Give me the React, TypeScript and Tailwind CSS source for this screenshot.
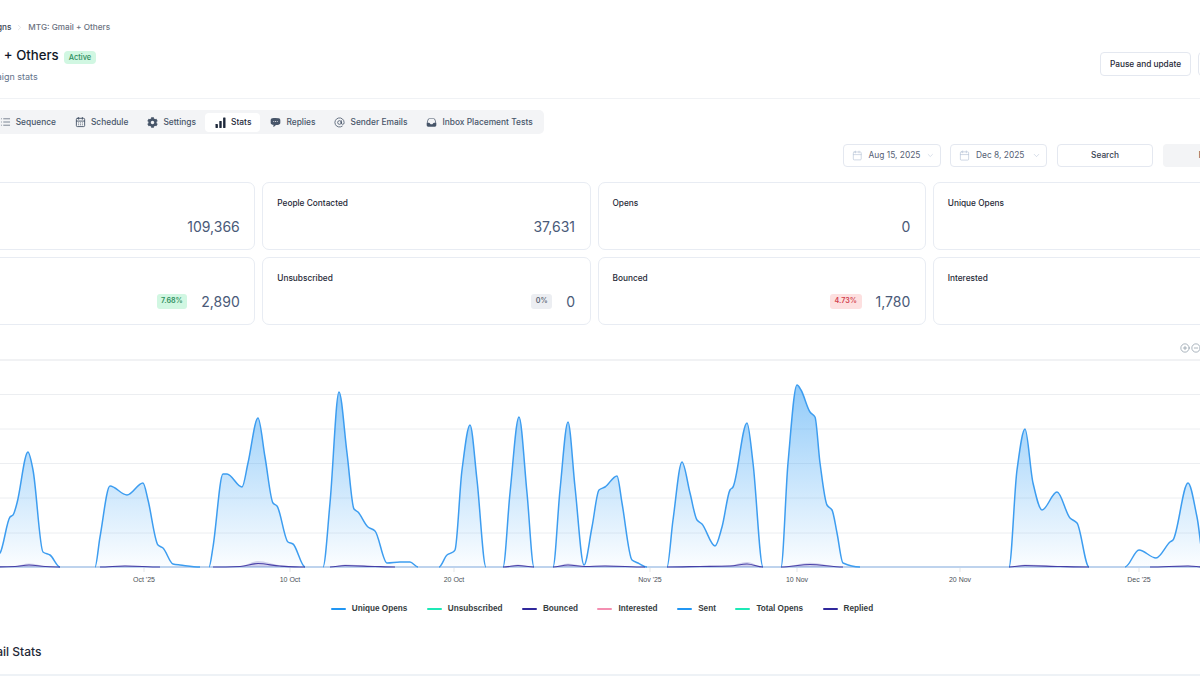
import { AtSign, Calendar, ChevronDown, ChevronRight, CircleMinus, CirclePlus, List, Users } from 'lucide-react';
import { FaCog } from 'react-icons/fa';
import { HiChatBubbleLeftEllipsis, HiInbox } from 'react-icons/hi2';
import { LuCalendarDays } from 'react-icons/lu';
import type { ReactNode } from 'react';

type Pt = [number, number];

const BASE = 567;

// main curve, one list per hump, in screen coordinates
const humps: Pt[][] = [
  [[-20, 567], [0, 553], [10, 517], [13, 515], [17, 503], [28, 452], [33, 470], [43, 552], [50, 555], [60, 567]],
  [[95, 567], [100, 537], [110, 486], [127, 495], [143, 483], [148, 500], [158, 545], [163, 548], [173, 564], [180, 565], [200, 567]],
  [[209, 567], [213, 547], [223, 474], [227, 474], [242, 487], [248, 463], [258, 418], [265, 457], [273, 503], [277, 506], [288, 542], [293, 544], [305, 567]],
  [[323, 567], [330, 503], [339, 392], [347, 453], [354, 509], [358, 512], [368, 527], [375, 531], [387, 563], [400, 562], [410, 562], [418, 567]],
  [[439, 567], [447, 555], [453, 552], [455, 550], [462, 470], [470, 425], [477, 480], [486, 567]],
  [[503, 567], [510, 493], [519, 417], [527, 493], [534, 567]],
  [[553, 567], [560, 490], [568, 422], [575, 487], [584, 565], [592, 527], [599, 490], [605, 487], [617, 476], [622, 503], [632, 560], [638, 563], [647, 567]],
  [[667, 567], [673, 520], [682, 462], [690, 493], [697, 520], [702, 524], [715, 546], [722, 527], [730, 490], [733, 487], [747, 423], [753, 463], [763, 567]],
  [[781, 567], [788, 463], [797, 385], [801, 390], [810, 412], [815, 417], [820, 463], [827, 505], [832, 510], [837, 533], [843, 563], [860, 567]],
  [[1009, 567], [1017, 470], [1025, 429], [1033, 483], [1042, 510], [1057, 492], [1070, 518], [1077, 523], [1089, 567]],
  [[1125, 567], [1139, 550], [1156, 558], [1170, 542], [1173, 540], [1188, 483], [1197, 517], [1205, 567]],
];

const bumps: Pt[][] = [
  [[-10, 567], [15, 566.5], [29, 565], [45, 566.5], [60, 567]],
  [[100, 567], [125, 566], [160, 567]],
  [[213, 567], [240, 566.5], [258, 563.5], [280, 566], [305, 567]],
  [[330, 567], [345, 565.5], [375, 566.5], [395, 567]],
  [[503, 567], [518, 565.5], [534, 567]],
  [[553, 567], [568, 565], [585, 566.5], [605, 566], [645, 567]],
  [[667, 567], [700, 566.5], [730, 566], [747, 564], [763, 567]],
  [[781, 567], [810, 564.5], [843, 567]],
  [[1009, 567], [1025, 565.5], [1060, 566.5], [1089, 567]],
  [[1150, 567], [1188, 566], [1205, 567]],
];

// monotone cubic, flat at peaks and at the baseline
const smooth = (pts: Pt[]) => {
  const s = pts.slice(1).map((p, i) => (p[1] - pts[i][1]) / (p[0] - pts[i][0]));
  const m = pts.map((_, i) => {
    if (i === 0 || i === pts.length - 1) return 0;
    const a = s[i - 1];
    const b = s[i];
    return a * b <= 0 ? 0 : (2 * a * b) / (a + b);
  });
  let d = `M${pts[0][0]} ${pts[0][1]}`;
  for (let i = 0; i < pts.length - 1; i++) {
    const dx = (pts[i + 1][0] - pts[i][0]) / 3;
    d += ` C${pts[i][0] + dx} ${pts[i][1] + m[i] * dx} ${pts[i + 1][0] - dx} ${pts[i + 1][1] - m[i + 1] * dx} ${pts[i + 1][0]} ${pts[i + 1][1]}`;
  }
  return d;
};

const gridLines = [360, 394.5, 429, 463.5, 498, 533];

const ticks: [number, string][] = [
  [144, "Oct '25"],
  [290, '10 Oct'],
  [454, '20 Oct'],
  [650, "Nov '25"],
  [797, '10 Nov'],
  [960, '20 Nov'],
  [1139, "Dec '25"],
];

const legend = [
  { label: 'Unique Opens', color: 'bg-[#2196f3]' },
  { label: 'Unsubscribed', color: 'bg-[#1de9b6]' },
  { label: 'Bounced', color: 'bg-[#30289c]' },
  { label: 'Interested', color: 'bg-[#f48fb1]' },
  { label: 'Sent', color: 'bg-[#2196f3]' },
  { label: 'Total Opens', color: 'bg-[#1de9b6]' },
  { label: 'Replied', color: 'bg-[#30289c]' },
];

const StatsBars = () => (
  <svg viewBox="0 0 11 11" className="w-[11px] h-[11px]" fill="#1e293b">
    <rect x="0.5" y="7" width="2.4" height="4" rx="0.4" />
    <rect x="4.3" y="4" width="2.4" height="7" rx="0.4" />
    <rect x="8.1" y="0.5" width="2.4" height="10.5" rx="0.4" />
  </svg>
);

const tabs: { label: string; icon: ReactNode; active?: boolean }[] = [
  { label: 'Leads', icon: <Users size={11} /> },
  { label: 'Sequence', icon: <List size={12} strokeWidth={1.5} /> },
  { label: 'Schedule', icon: <LuCalendarDays size={12} /> },
  { label: 'Settings', icon: <FaCog size={11} /> },
  { label: 'Stats', icon: <StatsBars />, active: true },
  { label: 'Replies', icon: <HiChatBubbleLeftEllipsis size={13} /> },
  { label: 'Sender Emails', icon: <AtSign size={11} strokeWidth={1.75} /> },
  { label: 'Inbox Placement Tests', icon: <HiInbox size={13} /> },
];

const cards: { label: string; value: string; badge?: string; badgeClass?: string }[] = [
  { label: 'Emails Sent', value: '109,366' },
  { label: 'People Contacted', value: '37,631' },
  { label: 'Opens', value: '0' },
  { label: 'Unique Opens', value: '0' },
  { label: 'Total Replies', value: '2,890', badge: '7.68%', badgeClass: 'bg-[#d1f7e2] text-[#2f8f5f]' },
  { label: 'Unsubscribed', value: '0', badge: '0%', badgeClass: 'bg-[#eceef2] text-[#5b6474]' },
  { label: 'Bounced', value: '1,780', badge: '4.73%', badgeClass: 'bg-[#fde0e0] text-[#d23f4d]' },
  { label: 'Interested', value: '0' },
];

const DateField = ({ value, className }: { value: string; className: string }) => (
  <div className={`h-[23px] flex items-center gap-[6px] pl-[8px] pr-[5px] rounded-[4px] border border-[#e4e8f0] text-[8.4px] text-[#556074] ${className}`}>
    <Calendar size={11} strokeWidth={1.5} className="text-[#b8c5d8]" />
    <span className="flex-1 whitespace-nowrap">{value}</span>
    <ChevronDown size={9} strokeWidth={1.5} className="text-[#b8c5d8]" />
  </div>
);

export default function App() {
  return (
    <div className="w-[1200px] h-[688px] overflow-hidden bg-white font-[Inter,sans-serif]">
      <div className="w-[1334px] -ml-[73px]">
        <header className="h-[99px] border-b border-[#f0f2f5] flex justify-between">
          <div>
            <div className="pt-[21px] pl-[17px] h-[43px] flex items-start gap-[4px] text-[8.2px] leading-[12px] font-medium">
              <span className="text-[#374151]">Email Campaigns</span>
              <ChevronRight size={9} strokeWidth={1.25} className="mt-[2px] text-[#c5cad3]" />
              <span className="text-[#6b7280]">MTG: Gmail + Others</span>
            </div>
            <div className="flex items-start gap-[5px]">
              <h1 className="text-[13.2px] leading-[24px] font-medium text-[#111827]">MTG: Gmail + Others</h1>
              <span className="mt-[8px] px-[5px] h-[13px] flex items-center rounded-[4px] bg-[#d1f7e2] text-[7.5px] font-medium text-[#2f8f5f]">Active</span>
            </div>
            <p className="mt-[3px] pl-[1px] text-[9px] leading-[14px] text-[#64748b]">View your campaign stats</p>
          </div>
          <div className="pt-[52px] flex items-start gap-[7px] text-[8.3px] font-medium text-[#1f2937]">
            <button className="w-[91px] h-[24px] rounded-[4px] border border-[#e4e8f0] bg-white">Pause and update</button>
            <button className="w-[63px] h-[24px] rounded-[4px] border border-[#e4e8f0] bg-white">Edit</button>
          </div>
        </header>

        <nav className="mt-[11px] w-fit h-[24px] flex items-center rounded-[5px] bg-[#f3f4f6] pl-[3.5px] pr-[2px]">
          {tabs.map((tab) => (
            <div
              key={tab.label}
              className={`h-[19px] pl-[10px] pr-[9px] flex items-center gap-[5px] rounded-[4px] text-[8.4px] font-medium whitespace-nowrap ${tab.active ? 'bg-white text-[#1e293b]' : 'text-[#475569]'}`}
            >
              <span className="w-[11px] flex justify-center">{tab.icon}</span>
              {tab.label}
            </div>
          ))}
        </nav>

        <div className="mt-[10px] flex justify-end">
          <DateField value="Aug 15, 2025" className="w-[98px]" />
          <DateField value="Dec 8, 2025" className="ml-[9px] w-[97px]" />
          <button className="ml-[10px] w-[96px] h-[23px] rounded-[4px] border border-[#e4e8f0] text-[8.3px] font-medium text-[#374151]">Search</button>
          <button className="ml-[10px] pr-[4px] w-[98px] h-[23px] rounded-[4px] bg-[#f3f4f6] text-[8.3px] font-medium text-[#374151]">Reset</button>
        </div>

        <section className="mt-[15px] grid grid-cols-4 gap-[7px]">
          {cards.map((card) => (
            <div key={card.label} className="h-[68px] rounded-[7px] border border-[#e8ecf3] pl-[14px] pr-[14.5px] pt-[14px]">
              <div className="text-[8.3px] leading-[12px] font-medium text-[#1f2937]">{card.label}</div>
              <div className="mt-[6px] h-[22px] flex items-center justify-end gap-[14px]">
                {card.badge && (
                  <span className={`h-[15px] px-[4.5px] flex items-center rounded-[3px] text-[7.2px] font-semibold ${card.badgeClass}`}>{card.badge}</span>
                )}
                <span className="text-[14px] text-[#4a5a78]">{card.value}</span>
              </div>
            </div>
          ))}
        </section>

        <div className="relative pt-[30px]">
          <div className="absolute left-[1253px] top-[18px] flex gap-[1px] text-[#7a8a99]">
            <CirclePlus size={10} strokeWidth={1.5} />
            <CircleMinus size={10} strokeWidth={1.5} />
          </div>
          <svg viewBox="-73 355 1334 235" className="block w-[1334px] h-[235px]">
            <defs>
              <linearGradient id="area" gradientUnits="userSpaceOnUse" x1="0" y1="385" x2="0" y2="567">
                <stop offset="0" stopColor="#42a5f5" stopOpacity="0.58" />
                <stop offset="1" stopColor="#42a5f5" stopOpacity="0.02" />
              </linearGradient>
            </defs>
            {gridLines.map((y) => (
              <line key={y} x1="-73" x2="1261" y1={y} y2={y} stroke="#eceef1" strokeWidth={y === 360 ? 1.5 : 1} />
            ))}
            {humps.map((pts, i) => (
              <path key={i} d={`${smooth(pts)} Z`} fill="url(#area)" />
            ))}
            <line x1="-73" x2="1261" y1={BASE} y2={BASE} stroke="#7fa8dc" strokeWidth="1.2" />
            {humps.map((pts, i) => (
              <path key={i} d={smooth(pts)} fill="none" stroke="#3d9df0" strokeWidth="1.5" />
            ))}
            {bumps.map((pts, i) => (
              <g key={i}>
                <path d={`${smooth(pts.map(([x, y]): Pt => [x, BASE - (BASE - y) * 1.7]))} Z`} fill="#7c74c4" fillOpacity="0.3" />
                <path d={smooth(pts)} fill="none" stroke="#33289c" strokeWidth="1.2" strokeOpacity="0.85" />
              </g>
            ))}
            {ticks.map(([x, label]) => (
              <g key={label}>
                <line x1={x} x2={x} y1="568" y2="572" stroke="#e3e5e8" />
                <text x={x} y="582" textAnchor="middle" fontSize="7" fill="#4b5157" fontFamily="'Liberation Sans', sans-serif">{label}</text>
              </g>
            ))}
          </svg>
        </div>

        <div className="pl-[16px] mt-[12px] h-[14px] flex justify-center items-center gap-[19.5px] font-['Liberation_Sans',sans-serif] text-[8.2px] font-bold text-[#373d3f]">
          {legend.map((item) => (
            <div key={item.label} className="flex items-center gap-[6px]">
              <span className={`w-[15px] h-[2.5px] rounded-full ${item.color}`} />
              {item.label}
            </div>
          ))}
        </div>

        <h2 className="mt-[28px] pl-[7px] text-[12px] leading-[16px] font-medium text-[#1f2937]">Sender Email Stats</h2>
        <div className="mt-[14px] border-t-2 border-[#eef2f6]" />
      </div>
    </div>
  );
}
